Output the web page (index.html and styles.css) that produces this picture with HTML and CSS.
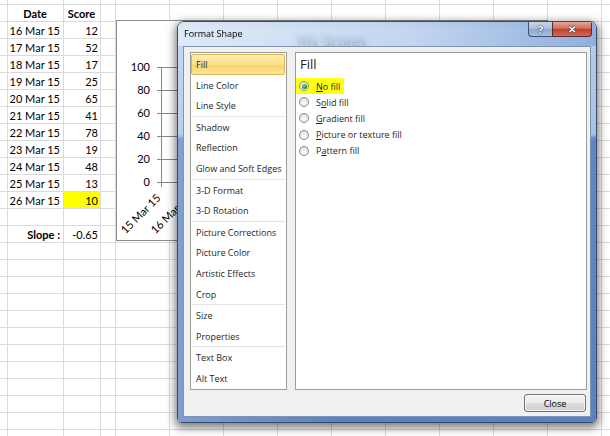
FILE: index.html
```html
<!DOCTYPE html>
<html>
<head>
<meta charset="utf-8">
<link rel="stylesheet" href="styles.css">
</head>
<body>
<div class="sheet">
  <div class="data">
    <div class="row head"><span>Date</span><span>Score</span></div>
    <div class="row"><span>16 Mar 15</span><span>12</span></div>
    <div class="row"><span>17 Mar 15</span><span>52</span></div>
    <div class="row"><span>18 Mar 15</span><span>17</span></div>
    <div class="row"><span>19 Mar 15</span><span>25</span></div>
    <div class="row"><span>20 Mar 15</span><span>65</span></div>
    <div class="row"><span>21 Mar 15</span><span>41</span></div>
    <div class="row"><span>22 Mar 15</span><span>78</span></div>
    <div class="row"><span>23 Mar 15</span><span>19</span></div>
    <div class="row"><span>24 Mar 15</span><span>48</span></div>
    <div class="row"><span>25 Mar 15</span><span>13</span></div>
    <div class="row"><span>26 Mar 15</span><span class="hl">10</span></div>
    <div class="row"><span></span><span></span></div>
    <div class="row slope"><span>Slope :</span><span>-0.65</span></div>
  </div>

  <div class="chart">
    <div class="chart-title">My Scores</div>
    <div class="ylabels"><span>100</span><span>80</span><span>60</span><span>40</span><span>20</span><span>0</span></div>
    <div class="gridlines"></div>
    <div class="yaxis"></div>
    <div class="xl xl1">15 Mar 15</div>
    <div class="xl xl2">16 Mar 15</div>
  </div>

  <div class="dialog">
    <div class="titlebar">
      <div class="title">Format Shape</div>
      <div class="tb-btns">
        <div class="tb-help">?</div>
        <div class="tb-close">✕</div>
      </div>
    </div>
    <div class="frame">
      <div class="client">
        <div class="panes">
          <div class="nav">
            <div class="item sel">Fill</div>
            <div class="item">Line Color</div>
            <div class="item">Line Style</div>
            <div class="sep"></div>
            <div class="item">Shadow</div>
            <div class="item">Reflection</div>
            <div class="item">Glow and Soft Edges</div>
            <div class="sep"></div>
            <div class="item">3-D Format</div>
            <div class="item">3-D Rotation</div>
            <div class="sep"></div>
            <div class="item">Picture Corrections</div>
            <div class="item">Picture Color</div>
            <div class="item">Artistic Effects</div>
            <div class="item">Crop</div>
            <div class="sep"></div>
            <div class="item">Size</div>
            <div class="item">Properties</div>
            <div class="sep"></div>
            <div class="item">Text Box</div>
            <div class="item">Alt Text</div>
          </div>
          <div class="content">
            <div class="heading">Fill</div>
            <div class="options">
              <div class="opt marked"><span class="radio on"></span><span><u>N</u>o fill</span></div>
              <div class="opt"><span class="radio"></span><span>S<u>o</u>lid fill</span></div>
              <div class="opt"><span class="radio"></span><span><u>G</u>radient fill</span></div>
              <div class="opt"><span class="radio"></span><span><u>P</u>icture or texture fill</span></div>
              <div class="opt"><span class="radio"></span><span>P<u>a</u>ttern fill</span></div>
            </div>
          </div>
        </div>
        <div class="footer">
          <button class="close">Close</button>
        </div>
      </div>
    </div>
  </div>
</div>
</body>
</html>
```

FILE: styles.css
```css
* { box-sizing: border-box; margin: 0; padding: 0; }
html, body { width: 610px; height: 436px; overflow: hidden; background: #fff; }
body { font-family: Lato, "Liberation Sans", sans-serif; color: #000; }

.sheet {
  position: relative;
  width: 610px;
  height: 436px;
  background-color: #fff;
  background-image:
    linear-gradient(to bottom, #dadada 0 1px, transparent 1px),
    linear-gradient(to right, transparent 7px, #dadada 7px 8px, transparent 8px 63px, #dadada 63px 64px, transparent 64px 100px, #dadada 100px 101px, transparent 101px 115px, #dadada 115px 116px, transparent 116px),
    repeating-linear-gradient(to right, transparent 0 53px, #dadada 53px 54px);
  background-size: 100% 17px, 100% 100%, 500px 100%;
  background-position: 0 4px, 0 0, 116px 0;
  background-repeat: repeat, no-repeat, no-repeat;
}

/* spreadsheet cells */
.data {
  display: grid;
  grid-template-columns: 56px 37px;
  grid-auto-rows: 17px;
  margin-left: 7px;
  padding-top: 4px;
  width: max-content;
  font-size: 11px;
}
.row { display: contents; }
.data span {
  line-height: 17px;
  padding-top: 1px;
  text-align: right;
  padding-right: 3px;
  white-space: nowrap;
}
.data span:nth-child(2) { padding-right: 2px; }
.head span { text-align: center; font-weight: bold; padding-right: 0; }
.head span:nth-child(2) { padding-right: 0; }
.slope span:first-child { font-weight: bold; }
.data .hl {
  background: linear-gradient(#ffff00, #ffff00) 1px 1px / calc(100% - 1px) calc(100% - 1px) no-repeat;
}

/* chart */
.chart {
  position: absolute;
  left: 116px;
  top: 20px;
  width: 432px;
  height: 221px;
  background: #fff;
  border: 1px solid #8c8c8c;
  font-size: 11px;
}
.chart-title {
  padding-top: 11px;
  text-align: center;
  font-weight: bold;
  font-size: 15px;
  line-height: 18px;
  color: #303030;
}
.ylabels {
  position: absolute;
  left: 0;
  top: 39px;
  width: 33px;
  display: flex;
  flex-direction: column;
  gap: 9px;
  text-align: right;
}
.ylabels span { line-height: 14px; height: 14px; }
.gridlines {
  position: absolute;
  left: 40px;
  top: 46px;
  width: 392px;
  height: 116px;
  background: linear-gradient(#868686 0 1px, transparent 1px) 0 0 / 100% 23px repeat-y;
}
.yaxis {
  position: absolute;
  left: 44px;
  top: 46px;
  width: 1px;
  height: 120px;
  background: #868686;
}
.xl {
  position: absolute;
  top: 168px;
  line-height: 14px;
  white-space: nowrap;
  transform: rotate(-45deg);
  transform-origin: 100% 50%;
}
.xl1 { right: 389px; }
.xl2 { right: 359px; }

/* dialog */
.dialog {
  position: absolute;
  left: 177px;
  top: 21px;
  width: 420px;
  height: 402px;
  border: 1px solid #3a4a63;
  border-radius: 7px 7px 5px 5px;
  overflow: hidden;
  display: flex;
  flex-direction: column;
  box-shadow: 0 3px 9px 2px rgba(0, 0, 0, 0.5);
  font-family: "Open Sans", "Noto Sans", sans-serif;
  font-size: 9px;
}
.titlebar {
  flex: none;
  height: 24px;
  display: flex;
  justify-content: space-between;
  align-items: flex-start;
  padding: 0 4px 0 6px;
  background: linear-gradient(to right, rgba(214, 228, 245, 0.8), rgba(176, 201, 235, 0.76) 55%, rgba(124, 161, 216, 0.85));
  backdrop-filter: blur(3px);
}
.title { padding-top: 6px; line-height: 12px; color: #000; }
.tb-btns { display: flex; }
.tb-help, .tb-close {
  height: 15px;
  display: flex;
  align-items: center;
  justify-content: center;
  color: #fff;
  font-weight: bold;
  border: 1px solid #3f5170;
  border-top: none;
  text-shadow: 0 0 2px #203050, 0 0 1px #203050;
}
.tb-help {
  width: 24px;
  border-radius: 0 0 0 4px;
  border-right: none;
  font-size: 11px;
  background: linear-gradient(#c9d6ea, #a8bcda 50%, #8ea6cc 52%, #a9c0e2);
}
.tb-close {
  width: 40px;
  border-radius: 0 0 4px 0;
  font-size: 10px;
  background: linear-gradient(#e7a596, #d0705f 45%, #bf3f2f 52%, #d46a55);
  border-color: #5a2a28;
}
.frame {
  flex: 1;
  display: flex;
  flex-direction: column;
  padding: 0 5px 5px;
  background:
    linear-gradient(to right, rgba(255, 255, 255, 0.22), rgba(255, 255, 255, 0) 40%),
    linear-gradient(to bottom, #b4cbea 0, #a8c2e6 88px, #5f86c6 93px, #5a81c2 100%);
}
.client {
  flex: 1;
  display: flex;
  flex-direction: column;
  border: 1px solid #7f93b3;
  background: #f0f0f0;
  padding: 5px 3px 4px 6px;
}
.panes {
  height: 338px;
  display: flex;
  gap: 8px;
}
.nav {
  width: 97px;
  border: 1px solid #9c9c9c;
  background: #fff;
  padding-top: 1px;
  display: flex;
  flex-direction: column;
}
.item {
  height: 20.6px;
  line-height: 21px;
  padding-left: 5px;
  white-space: nowrap;
  color: #1e1e1e;
}
.item.sel {
  margin-right: 1px;
  padding-left: 4px;
  border: 1px solid #e0b553;
  border-radius: 2px;
  line-height: 19px;
  background: linear-gradient(#fdeeb3, #fbe08a 50%, #f9d46b 52%, #fbe39a);
}
.sep { height: 1px; background: #e4e4e4; margin: 0 1px; }
.content {
  flex: 1;
  border: 1px solid #9c9c9c;
  background: #fff;
  padding: 3px 3px;
}
.heading {
  font-size: 13px;
  line-height: 17px;
  padding-left: 1px;
  color: #1e1e1e;
}
.options { margin-top: 5px; display: flex; flex-direction: column; }
.opt {
  height: 16.2px;
  display: flex;
  align-items: center;
  gap: 7px;
  color: #1e1e1e;
  white-space: nowrap;
}
.opt.marked {
  width: fit-content;
  margin-left: -3px;
  padding: 0 4px 0 3px;
  background: #ffff14;
}
.radio {
  width: 10px;
  height: 10px;
  flex: none;
  border-radius: 50%;
  border: 1px solid #8a8b8b;
  background: radial-gradient(circle at 50% 65%, #ffffff 0, #e6e6e6 60%, #cdcdcd 100%);
  position: relative;
}
.radio.on::after {
  content: "";
  position: absolute;
  left: 1.5px;
  top: 1.5px;
  width: 5px;
  height: 5px;
  border-radius: 50%;
  background: radial-gradient(circle at 40% 35%, #9fe08c 0, #2f9426 50%, #15600f 100%);
}
.footer {
  margin-top: 4px;
  display: flex;
  justify-content: flex-end;
  padding-right: 1px;
}
.close {
  width: 62px;
  height: 18px;
  border: 1px solid #707070;
  border-radius: 3px;
  background: linear-gradient(#f3f3f3, #ebebeb 48%, #dddddd 52%, #cfcfcf);
  font-family: "Open Sans", "Noto Sans", sans-serif;
  font-size: 9px;
  color: #000;
  box-shadow: inset 0 0 0 1px rgba(255, 255, 255, 0.7);
}
```
